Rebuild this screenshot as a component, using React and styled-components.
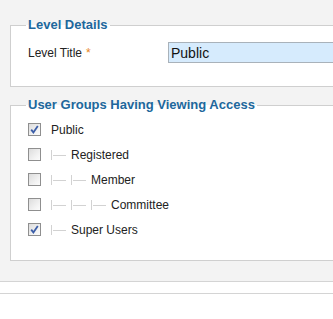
import React from 'react';
import styled, { createGlobalStyle } from 'styled-components';

const GlobalStyle = createGlobalStyle`
  html, body {
    margin: 0;
    padding: 0;
    background: #fff;
    overflow: hidden;
    font-family: Arial, "Liberation Sans", sans-serif;
  }
`;

const Main = styled.div`
  background: #f3f3f3;
  border-bottom: 1px solid #d4d4d4;
  padding: 17px 0 20px 10px;
  width: 520px;
`;

const Footer = styled.div`
  margin-top: 11px;
  border-top: 1px solid #d4d4d4;
  height: 30px;
  background: #fff;
`;

const Fieldset = styled.fieldset`
  margin: ${(p) => (p.$first ? '0' : '10px 0 0')};
  padding: 0 17px ${(p) => p.$bottom}px;
  border: 1px solid #cfcfcf;
  background: #fff;
  min-width: 0;
`;

const Legend = styled.legend`
  margin-left: -2px;
  padding: 0 2px;
  font-size: 13px;
  line-height: 16px;
  font-weight: bold;
  color: #20679c;
`;

const FieldRow = styled.div`
  display: flex;
  align-items: center;
  margin-top: 9px;
`;

const Label = styled.label`
  width: 140px;
  font-size: 12px;
  color: #222;
`;

const Star = styled.span`
  color: #e8851c;
  margin-left: 4px;
`;

const TextInput = styled.input`
  box-sizing: border-box;
  width: 300px;
  height: 21px;
  margin: 0;
  padding: 0 2px;
  border: 1px solid #a9b2ba;
  background: #d6ebfd;
  font-family: Arial, "Liberation Sans", sans-serif;
  font-size: 14px;
  color: #111;
  outline: none;
`;

const GroupList = styled.ul`
  list-style: none;
  margin: 4px 0 0;
  padding: 0;
`;

const GroupItem = styled.li`
  display: flex;
  align-items: center;
  height: 25px;
  font-size: 12px;
  color: #222;
`;

const Box = styled.span`
  box-sizing: border-box;
  width: 13px;
  height: 13px;
  margin-right: 10px;
  border: 1px solid #8f8f8f;
  background: linear-gradient(135deg, #dcdcdc 0%, #f4f4f4 70%, #fbfbfb 100%);
  display: flex;
  align-items: center;
  justify-content: center;
`;

const Tree = styled.span`
  position: relative;
  display: inline-block;
  width: 14px;
  height: 10px;
  margin: 0 5px 0 0;
  border-left: 1px solid #d2d2d2;

  &::after {
    content: '';
    position: absolute;
    left: 1px;
    right: 0;
    top: 5px;
    border-top: 1px solid #d2d2d2;
  }
`;

const Checkbox = ({ checked }) => (
  <Box>
    {checked && (
      <svg width="9" height="9" viewBox="0 0 9 9">
        <path d="M1.2 4.6 L3.4 7.4 L7.8 1" fill="none" stroke="#3c5ea8" strokeWidth="1.8" />
      </svg>
    )}
  </Box>
);

const groups = [
  { name: 'Public', level: 0, checked: true },
  { name: 'Registered', level: 1, checked: false },
  { name: 'Member', level: 2, checked: false },
  { name: 'Committee', level: 3, checked: false },
  { name: 'Super Users', level: 1, checked: true },
];

export default function App() {
  return (
    <>
      <GlobalStyle />
      <Main>
        <Fieldset $first $bottom={23}>
          <Legend>Level Details</Legend>
          <FieldRow>
            <Label>
              Level Title<Star>*</Star>
            </Label>
            <TextInput defaultValue="Public" />
          </FieldRow>
        </Fieldset>
        <Fieldset $bottom={18}>
          <Legend>User Groups Having Viewing Access</Legend>
          <GroupList>
            {groups.map((g) => (
              <GroupItem key={g.name}>
                <Checkbox checked={g.checked} />
                {Array.from({ length: g.level }).map((_, i) => (
                  <Tree key={i} />
                ))}
                {g.name}
              </GroupItem>
            ))}
          </GroupList>
        </Fieldset>
      </Main>
      <Footer />
    </>
  );
}
